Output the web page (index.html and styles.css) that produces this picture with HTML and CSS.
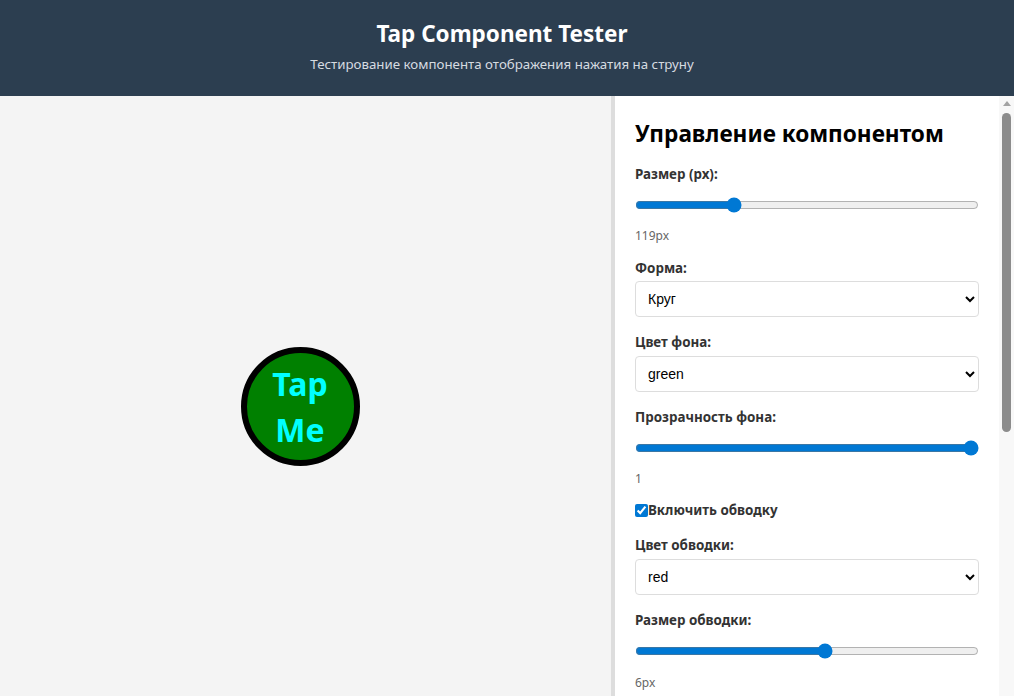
FILE: index.html
```html
<!DOCTYPE html>
<html lang="ru">
<head>
<meta charset="utf-8">
<title>Tap Component Tester</title>
<link rel="stylesheet" href="styles.css">
</head>
<body>
<header class="header">
  <h1 class="title">Tap Component Tester</h1>
  <p class="subtitle">Тестирование компонента отображения нажатия на струну</p>
</header>
<main class="main">
  <section class="stage">
    <div class="tap"><span class="tap-text">Tap Me</span></div>
  </section>
  <aside class="panel">
    <div class="panel-body">
      <h2 class="panel-title">Управление компонентом</h2>

      <div class="group">
        <label class="label">Размер (px):</label>
        <input class="range" type="range" min="50" max="300" value="119">
        <div class="value">119px</div>
      </div>

      <div class="group">
        <label class="label">Форма:</label>
        <select class="select"><option>Круг</option><option>Квадрат</option></select>
      </div>

      <div class="group">
        <label class="label">Цвет фона:</label>
        <select class="select"><option>green</option><option>red</option></select>
      </div>

      <div class="group">
        <label class="label">Прозрачность фона:</label>
        <input class="range" type="range" min="0" max="1" step="0.1" value="1">
        <div class="value">1</div>
      </div>

      <div class="group group-check">
        <label class="check"><input class="checkbox" type="checkbox" checked>Включить обводку</label>
      </div>

      <div class="group">
        <label class="label">Цвет обводки:</label>
        <select class="select"><option>red</option><option>black</option></select>
      </div>

      <div class="group">
        <label class="label">Размер обводки:</label>
        <input class="range" type="range" min="1" max="10" value="6">
        <div class="value">6px</div>
      </div>
    </div>
    <div class="scrollbar" aria-hidden="true">
      <div class="scroll-arrow"></div>
      <div class="scroll-thumb"></div>
    </div>
  </aside>
</main>
</body>
</html>
```
FILE: styles.css
```css
* { box-sizing: border-box; }
html, body { height: 100%; }
body {
  margin: 0;
  font-family: "Noto Sans", "Open Sans", sans-serif;
  color: #333;
  overflow: hidden;
  display: flex;
  flex-direction: column;
}
.header {
  background: #2c3e50;
  color: #fff;
  height: 96px;
  text-align: center;
  padding: 18px 10px 0 0;
}
.title {
  margin: 0;
  font-size: 22.5px;
  font-weight: 700;
  line-height: 32px;
}
.subtitle {
  margin: 0;
  margin-top: 5px;
  font-size: 13.3px;
  line-height: 18px;
  color: #d6dbe0;
}
.main {
  flex: 1;
  display: flex;
  min-height: 0;
}
.stage {
  flex: 1;
  background: #f4f4f4;
  display: flex;
  align-items: center;
  justify-content: center;
  padding: 20px 11px 0 0;
}
.tap {
  width: 119px;
  height: 119px;
  border-radius: 50%;
  background: green;
  border: 6px solid #000;
  display: flex;
  align-items: center;
  justify-content: center;
}
.tap-text {
  width: min-content;
  text-align: center;
  color: #00ffff;
  font-weight: 700;
  font-size: 32px;
  line-height: 46px;
  padding-top: 2px;
}
.panel {
  flex: 0 0 403px;
  border-left: 4px solid #ddd;
  background: #fff;
  display: flex;
  overflow: hidden;
}
.panel-body {
  flex: 1;
  min-width: 0;
  overflow: hidden;
  padding: 22px 20px 20px 20px;
}
.scrollbar {
  flex: 0 0 15px;
  background: #f8f8f8;
  display: flex;
  flex-direction: column;
  align-items: center;
  padding-top: 5px;
}
.scroll-arrow {
  width: 0;
  height: 0;
  border-left: 4px solid transparent;
  border-right: 4px solid transparent;
  border-bottom: 5px solid #a3a3a3;
}
.scroll-thumb {
  margin-top: 7px;
  width: 9px;
  height: 319px;
  border-radius: 5px;
  background: #8c8c8c;
}
.panel-title {
  margin: 0 0 15px 0;
  font-size: 22.6px;
  line-height: 32px;
  color: #000;
  font-weight: 700;
}
.group {
  margin-bottom: 16px;
}
.group-check {
  padding-bottom: 2px;
}
.label {
  display: block;
  font-size: 13.4px;
  font-weight: 700;
  line-height: 18px;
  margin-bottom: 4px;
}
.select + .label,
.label + .select {
  margin-top: 0;
}
.group:nth-child(4) .label,
.group:nth-child(5) .label,
.group:nth-child(7) .label {
  margin-bottom: 5px;
}
.range {
  display: block;
  width: 100%;
  margin: 14px 0 0 0;
  accent-color: #0078d4;
}
.value {
  margin-top: 16px;
  font-size: 12px;
  line-height: 14px;
  color: #666;
}
.group:nth-child(8) .value {
  margin-top: 17px;
}
.select {
  display: block;
  width: 100%;
  height: 36px;
  padding: 0 8px;
  border: 1px solid #ddd;
  border-radius: 4px;
  background: #fff;
  font-family: "Liberation Sans", Arial, sans-serif;
  font-size: 14px;
  color: #000;
}
.check {
  display: flex;
  align-items: center;
  font-size: 13.4px;
  font-weight: 700;
  line-height: 16px;
}
.checkbox {
  margin: 0;
  width: 13px;
  height: 13px;
  accent-color: #0078d4;
}
```
